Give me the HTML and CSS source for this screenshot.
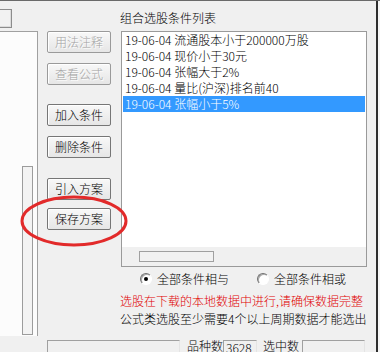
FILE: index.html
```html
<!DOCTYPE html>
<html lang="zh-CN">
<head>
<meta charset="utf-8">
<link rel="stylesheet" href="styles.css">
</head>
<body>
<div class="screen">
  <div class="topline"></div>
  <div class="frame">
    <div class="content">
      <div class="upper">
        <div class="leftcol">
          <div class="stubrow"><div class="stub"></div></div>
          <div class="leftbody">
            <div class="tree"><div class="vscroll"></div></div>
            <div class="btns">
              <div class="btn disabled b1">用法注释</div>
              <div class="btn disabled b2">查看公式</div>
              <div class="btn b3">加入条件</div>
              <div class="btn b4">删除条件</div>
              <div class="btn b5">引入方案</div>
              <div class="btn b6">保存方案</div>
            </div>
          </div>
        </div>
        <div class="rightcol">
          <div class="title">组合选股条件列表</div>
          <div class="list">
            <div class="row">19-06-04 流通股本小于200000万股</div>
            <div class="row">19-06-04 现价小于30元</div>
            <div class="row">19-06-04 张幅大于2%</div>
            <div class="row">19-06-04 量比(沪深)排名前40</div>
            <div class="row sel">19-06-04 张幅小于5%</div>
            <div class="spacer"></div>
            <div class="hscroll"><div class="thumb"></div></div>
          </div>
          <div class="radios">
            <span class="radio checked"></span><span class="rlabel">全部条件相与</span>
            <span class="radio r2"></span><span class="rlabel">全部条件相或</span>
          </div>
          <div class="note red">选股在下载的本地数据中进行,请确保数据完整</div>
          <div class="note">公式类选股至少需要4个以上周期数据才能选出</div>
        </div>
      </div>
      <div class="bottom">
        <div class="field box1"></div>
        <div class="lbl l1">品种数</div>
        <div class="field box2">3628</div>
        <div class="lbl l2">选中数</div>
        <div class="field box3"></div>
      </div>
    </div>
    <div class="edge-dark"></div>
    <div class="edge-light"></div>
  </div>
  <svg class="mark" width="380" height="352" viewBox="0 0 380 352">
    <ellipse cx="74" cy="221" rx="52" ry="24" fill="none" stroke="#e22a2a" stroke-width="3"/>
  </svg>
</div>
</body>
</html>
```

FILE: styles.css
```css
* { box-sizing: border-box; margin: 0; padding: 0; }
html, body { width: 380px; height: 352px; overflow: hidden; background: #f0f0f0; }
body { font-family: "Noto Sans CJK SC", "Noto Sans", sans-serif; font-size: 12px; font-weight: 300; color: #000; }

.screen { position: relative; width: 380px; height: 352px; display: flex; flex-direction: column; }
.topline { height: 2px; background: #4a4a4a; border-bottom: 1px solid #6a6a6a; }
.frame { flex: 1; display: flex; }
.content { width: 376px; display: flex; flex-direction: column; }
.edge-dark { width: 2px; background: #2e2e2e; }
.edge-light { width: 2px; background: #f6f6f6; }

.upper { height: 339px; display: flex; }
.leftcol { width: 121px; display: flex; flex-direction: column; }
.stubrow { height: 30px; padding-top: 8px; }
.stub { width: 12px; height: 19px; border: 1px solid #8c8c8c; border-left: 0; background: #f2f2f2; box-shadow: inset -1px -1px 0 #dcdcdc; }
.leftbody { display: flex; }
.tree { width: 38px; height: 305px; background: #fcfcfc; border-top: 1px solid #a0a0a0; border-right: 1px solid #a0a0a0; padding: 134px 0 0 22px; }
.vscroll { width: 11px; height: 169px; border: 1px solid #9c9c9c; background: #f3f3f3; }

.btns { margin-left: 9px; width: 64px; display: flex; flex-direction: column; }
.btn { height: 22px; line-height: 20px; text-align: center; border: 1px solid #767676; border-radius: 2px; background: linear-gradient(#f8f8f8, #e6e6e6); box-shadow: inset 1px 1px 0 #ffffff; white-space: nowrap; }
.btn.disabled { color: #a3a3a3; text-shadow: 1px 1px 0 #ffffff; border-color: #9a9a9a; }
.b2 { margin-top: 10px; }
.b3 { margin-top: 19px; }
.b4 { margin-top: 10px; }
.b5 { margin-top: 20px; }
.b6 { margin-top: 8px; }

.rightcol { width: 246px; display: flex; flex-direction: column; }
.title { height: 30px; padding-top: 9px; line-height: 16px; margin-left: -1px; }
.list { height: 236px; border: 1px solid #9a9a9a; background: #ffffff; display: flex; flex-direction: column; }
.row { height: 16px; line-height: 16px; padding-left: 2px; margin: 0 1px; white-space: nowrap; }
.row.sel { background: #3399ff; color: #ffffff; }
.spacer { flex: 1; }
.hscroll { height: 19px; background: #f0f0f0; padding: 4px 0 0 17px; }
.thumb { width: 75px; height: 11px; border: 1px solid #a0a0a0; background: #f2f2f2; }

.radios { margin-top: 3px; height: 18px; display: flex; align-items: center; padding-left: 19px; }
.radio { position: relative; width: 12px; height: 12px; border-radius: 50%; border: 1px solid; border-color: #707070 #ffffff #ffffff #707070; background: #ffffff; box-shadow: inset 1px 1px 0 #a8a8a8; }
.radio.checked::after { content: ""; position: absolute; left: 3px; top: 3px; width: 4px; height: 4px; border-radius: 50%; background: #000; }
.rlabel { margin-left: 5px; line-height: 18px; }
.r2 { margin-left: 28px; }

.note { line-height: 18px; margin-left: -1px; white-space: nowrap; }
.red { color: #e00000; margin-top: 4px; }

.bottom { display: flex; align-items: flex-start; }
.field { height: 20px; border: 1px solid; border-color: #a0a0a0 #e4e4e4 #e4e4e4 #a0a0a0; background: #f0f0f0; }
.box1 { margin-left: 47px; width: 133px; }
.lbl { line-height: 16px; margin-top: -2px; white-space: nowrap; }
.l1 { margin-left: 7px; }
.box2 { width: 34px; line-height: 13px; padding-left: 2px; }
.l2 { margin-left: 6px; }
.box3 { margin-left: 3px; width: 63px; }

.mark { position: absolute; left: 0; top: 0; pointer-events: none; }
```
